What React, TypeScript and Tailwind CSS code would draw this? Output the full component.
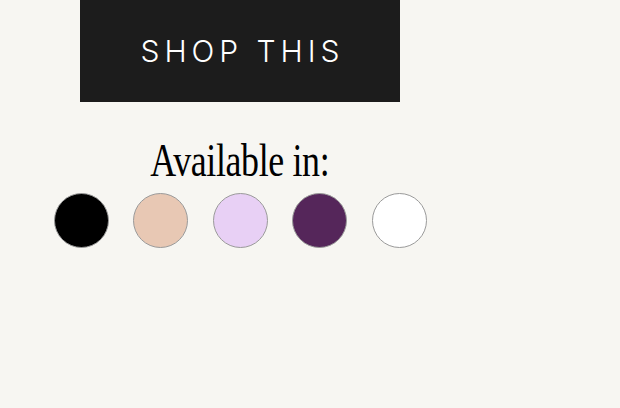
export default function App() {
  const colors = ["#000000", "#e8c8b4", "#e8d0f5", "#55265a", "#ffffff"];
  return (
    <div className="w-[620px] h-[408px] bg-[#f7f6f2] overflow-hidden">
      <div className="w-[480px] flex flex-col items-center">
        <button className="w-[320px] h-[102px] bg-[#1c1c1c] flex items-center justify-center">
          <span
            className="text-white text-[30px] tracking-[0.165em] pl-[0.165em] leading-none"
            style={{ fontFamily: "Inter, 'Open Sans', sans-serif", fontWeight: 300 }}
          >
            SHOP THIS
          </span>
        </button>
        <div className="mt-[30px] h-[58px] flex items-center justify-center">
          <span
            className="inline-block text-[46px] leading-none text-black scale-x-[0.78] tracking-[-0.01em]"
            style={{ fontFamily: "'Liberation Serif', serif" }}
          >
            Available in:
          </span>
        </div>
        <div className="mt-[3px] flex gap-[24.5px]">
          {colors.map((c) => (
            <div
              key={c}
              className="w-[55px] h-[55px] rounded-full border border-[#9a9a9a]"
              style={{ backgroundColor: c }}
            />
          ))}
        </div>
      </div>
    </div>
  );
}
